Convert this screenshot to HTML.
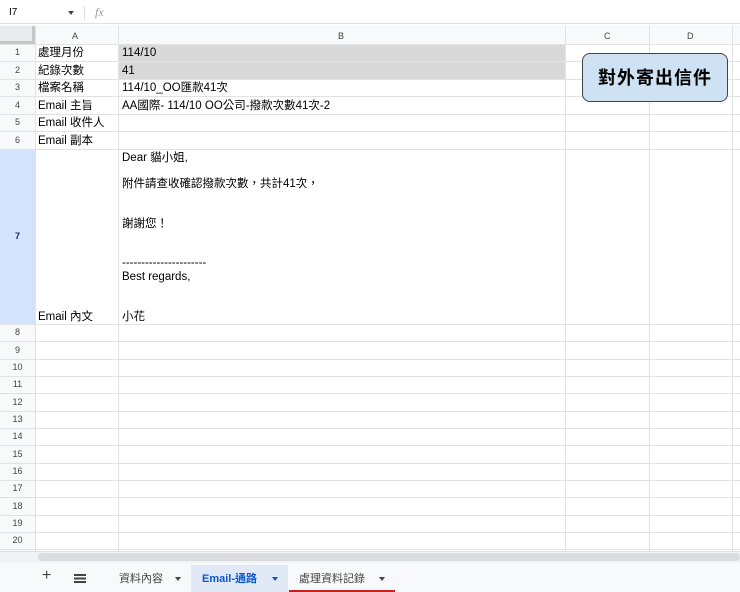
<!DOCTYPE html>
<html><head><meta charset="utf-8"><style>
*{margin:0;padding:0;box-sizing:border-box}
body{width:740px;height:592px;overflow:hidden;background:#fff;font-family:"Liberation Sans","Noto Sans CJK TC",sans-serif;position:relative;color:#000}
.a{position:absolute}
.h{background:#f8f9fa}
.hl{position:absolute;left:0;width:740px;height:1px;background:#e2e2e2}
.vl{position:absolute;top:26px;width:1px;height:525px;background:#e2e2e2}
.rn{position:absolute;left:0;width:35px;text-align:center;font-size:9px;color:#444}
.t{position:absolute;font-size:11.5px;white-space:nowrap;line-height:14px}
</style></head><body>
<!-- top bar -->
<div class="a" style="left:0;top:0;width:740px;height:24px;background:#fff;border-bottom:1px solid #e0e0e0"></div>
<div class="t" style="left:9px;top:6px;font-size:10px">I7</div>
<div class="a" style="left:68px;top:11px;width:0;height:0;border-left:3px solid transparent;border-right:3px solid transparent;border-top:4px solid #444"></div>
<div class="a" style="left:84px;top:6px;width:1px;height:14px;background:#ddd"></div>
<div class="t" style="left:95px;top:5px;font-family:'Liberation Serif',serif;font-style:italic;color:#999;font-size:12px">fx</div>
<!-- header row -->
<div class="a h" style="left:0;top:25px;width:740px;height:19px"></div>
<div class="a h" style="left:0;top:25px;width:35px;height:526px"></div>
<div class="a" style="left:0;top:149px;width:35px;height:175px;background:#d3e3fd"></div>
<div class="a" style="left:0;top:26px;width:35px;height:18px;background:#e8eaed;border-right:3px solid #c4c7c5;border-bottom:3px solid #c4c7c5"></div>
<div class="t" style="left:72px;top:29px;font-size:9px;color:#444">A</div>
<div class="t" style="left:338px;top:29px;font-size:9px;color:#444">B</div>
<div class="t" style="left:604px;top:29px;font-size:9px;color:#444">C</div>
<div class="t" style="left:687px;top:29px;font-size:9px;color:#444">D</div>
<!-- gray cells -->
<div class="a" style="left:118px;top:44px;width:447px;height:35px;background:#d9d9d9"></div>
<!-- grid lines -->
<div class="hl" style="top:44px"></div><div class="hl" style="top:61px"></div><div class="hl" style="top:79px"></div><div class="hl" style="top:96px"></div><div class="hl" style="top:114px"></div><div class="hl" style="top:131px"></div><div class="hl" style="top:149px"></div><div class="hl" style="top:324px"></div><div class="hl" style="top:341px"></div><div class="hl" style="top:359px"></div><div class="hl" style="top:376px"></div><div class="hl" style="top:393px"></div><div class="hl" style="top:411px"></div><div class="hl" style="top:428px"></div><div class="hl" style="top:445px"></div><div class="hl" style="top:463px"></div><div class="hl" style="top:480px"></div><div class="hl" style="top:497px"></div><div class="hl" style="top:515px"></div><div class="hl" style="top:532px"></div><div class="hl" style="top:549px"></div>
<div class="vl" style="left:35px"></div><div class="vl" style="left:118px"></div><div class="vl" style="left:565px"></div><div class="vl" style="left:649px"></div><div class="vl" style="left:732px"></div>
<!-- row numbers -->
<div class="rn" style="top:47px">1</div><div class="rn" style="top:65px">2</div><div class="rn" style="top:82px">3</div><div class="rn" style="top:100px">4</div><div class="rn" style="top:117px">5</div><div class="rn" style="top:135px">6</div>
<div class="rn" style="top:231px;font-weight:bold;color:#0b2a6b">7</div>
<div class="rn" style="top:327px">8</div><div class="rn" style="top:345px">9</div><div class="rn" style="top:362px">10</div><div class="rn" style="top:379px">11</div><div class="rn" style="top:397px">12</div><div class="rn" style="top:414px">13</div><div class="rn" style="top:431px">14</div><div class="rn" style="top:449px">15</div><div class="rn" style="top:466px">16</div><div class="rn" style="top:483px">17</div><div class="rn" style="top:501px">18</div><div class="rn" style="top:518px">19</div><div class="rn" style="top:535px">20</div>
<!-- col A -->
<div class="t" style="left:38px;top:46px">處理月份</div>
<div class="t" style="left:38px;top:64px">紀錄次數</div>
<div class="t" style="left:38px;top:81px">檔案名稱</div>
<div class="t" style="left:38px;top:99px">Email 主旨</div>
<div class="t" style="left:38px;top:116px">Email 收件人</div>
<div class="t" style="left:38px;top:134px">Email 副本</div>
<div class="t" style="left:38px;top:310px">Email 內文</div>
<!-- col B -->
<div class="t" style="left:122px;top:46px">114/10</div>
<div class="t" style="left:122px;top:64px">41</div>
<div class="t" style="left:122px;top:81px">114/10_OO匯款41次</div>
<div class="t" style="left:122px;top:99px">AA國際- 114/10 OO公司-撥款次數41次-2</div>
<div class="t" style="left:122px;top:151px">Dear 貓小姐,</div>
<div class="t" style="left:122px;top:177px">附件請查收確認撥款次數，共計41次，</div>
<div class="t" style="left:122px;top:217px">謝謝您！</div>
<div class="t" style="left:122px;top:256px">----------------------</div>
<div class="t" style="left:122px;top:270px">Best regards,</div>
<div class="t" style="left:122px;top:310px">小花</div>
<!-- button -->
<div class="a" style="left:582px;top:53px;width:146px;height:49px;background:#cfe2f3;border:1.5px solid #444;border-radius:8px;text-align:center;line-height:46px;font-size:18px;font-weight:bold;letter-spacing:1px;font-family:'Noto Sans CJK TC',sans-serif">對外寄出信件</div>
<!-- scrollbar -->
<div class="a" style="left:0;top:551px;width:740px;height:12px;background:#f1f3f4;border-top:1px solid #e0e0e0"></div>
<div class="a" style="left:38px;top:553px;width:702px;height:8px;background:#dadce0;border-radius:4px"></div>
<!-- tabs -->
<div class="a" style="left:0;top:563px;width:740px;height:29px;background:#f8f9fa"></div>
<div class="t" style="left:42px;top:569px;font-size:16px;color:#444">+</div>
<div class="a" style="left:74px;top:574px;width:12px;height:1.5px;background:#444;box-shadow:0 3.5px 0 #444,0 7px 0 #444"></div>
<div class="t" style="left:119px;top:572px;font-size:11px;color:#444">資料內容</div>
<div class="a" style="left:175px;top:577px;border-left:3px solid transparent;border-right:3px solid transparent;border-top:4px solid #444"></div>
<div class="a" style="left:191px;top:565px;width:97px;height:27px;background:#e1e9f7"></div>
<div class="t" style="left:202px;top:572px;font-size:11px;color:#0b57d0;font-weight:bold">Email-通路</div>
<div class="a" style="left:272px;top:577px;border-left:3px solid transparent;border-right:3px solid transparent;border-top:4px solid #0b57d0"></div>
<div class="t" style="left:299px;top:572px;font-size:11px;color:#444">處理資料記錄</div>
<div class="a" style="left:379px;top:577px;border-left:3px solid transparent;border-right:3px solid transparent;border-top:4px solid #444"></div>
<div class="a" style="left:289px;top:590px;width:106px;height:2px;background:#c5221f"></div>
</body></html>
